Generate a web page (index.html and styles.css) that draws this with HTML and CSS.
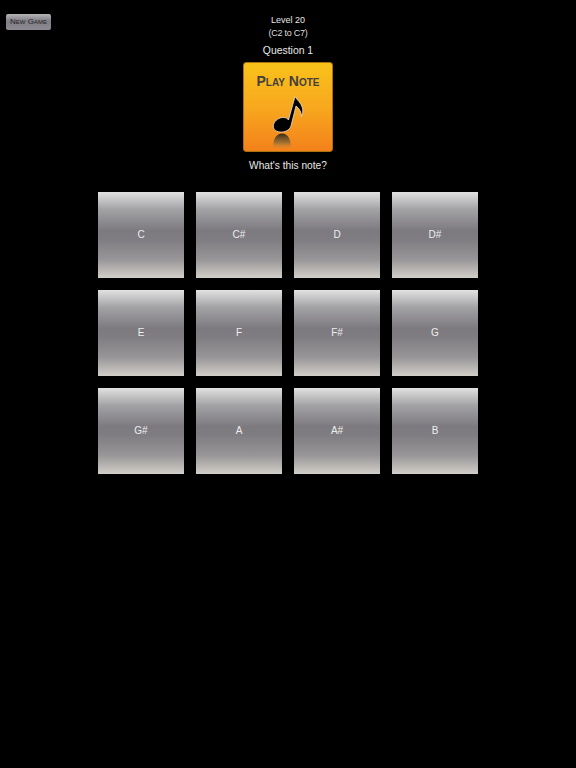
FILE: index.html
```html
<!DOCTYPE html>
<html lang="en">
<head>
<meta charset="utf-8">
<title>Level 20</title>
<link rel="stylesheet" href="styles.css">
</head>
<body>
<button class="new-game">New Game</button>
<main class="game">
  <div class="level">Level 20</div>
  <div class="range">(C2 to C7)</div>
  <div class="question">Question 1</div>
  <button class="play">
    <span class="play-label">Play Note</span>
    <svg class="note" viewBox="0 0 46 64" width="46" height="64" aria-hidden="true">
      <defs>
        <linearGradient id="refl" x1="0" y1="0" x2="0" y2="1">
          <stop offset="0" stop-color="#2e2416" stop-opacity=".95"/>
          <stop offset=".6" stop-color="#77603c" stop-opacity=".7"/>
          <stop offset="1" stop-color="#b08a48" stop-opacity=".15"/>
        </linearGradient>
      </defs>
      <path d="M8.500 58C7.500 50 11 43.500 17 43.500S26.500 50 25.500 58z" fill="url(#refl)"/>
      <path d="M23.500 30 30 6.500c2 3.500 6 6 7.500 11.500.8 3 0 6-1 8.500 0-4.500-2.500-8.500-5.500-10.500L26 36c-1.500 4-6 6.500-11 6-5-.5-7.500-3.500-6.500-7.500 1-4 6-7.500 10.500-7 2 .2 3.700 1 4.500 2.500z" fill="#000" stroke="#e8e0d0" stroke-width=".8" stroke-linejoin="round"/>
    </svg>
  </button>
  <div class="prompt">What's this note?</div>
  <div class="notes">
    <button class="key">C</button>
    <button class="key">C#</button>
    <button class="key">D</button>
    <button class="key">D#</button>
    <button class="key">E</button>
    <button class="key">F</button>
    <button class="key">F#</button>
    <button class="key">G</button>
    <button class="key">G#</button>
    <button class="key">A</button>
    <button class="key">A#</button>
    <button class="key">B</button>
  </div>
</main>
</body>
</html>
```
FILE: styles.css
```css
html, body {
  margin: 0;
  height: 100%;
  background: #000;
}
body {
  position: relative;
  width: 576px;
  height: 768px;
  overflow: hidden;
  font-family: "Liberation Sans", Arial, sans-serif;
  color: #fff;
}
button {
  font-family: inherit;
  padding: 0;
  cursor: pointer;
}
.new-game {
  position: absolute;
  left: 6px;
  top: 14px;
  width: 45px;
  height: 16px;
  border: 0;
  border-radius: 2px;
  background: linear-gradient(#b4b3b6, #807e84 45%, #8e8c92);
  color: #26262a;
  font-size: 8px;
  font-variant: small-caps;
  line-height: 16px;
  white-space: nowrap;
  text-align: center;
}
.game {
  display: flex;
  flex-direction: column;
  align-items: center;
  padding-top: 14px;
}
.level {
  font-size: 9px;
  line-height: 13px;
  color: #e6e6e6;
}
.range {
  font-size: 9px;
  letter-spacing: -.25px;
  line-height: 12px;
  color: #dcdcdc;
}
.question {
  font-size: 10.400px;
  line-height: 14px;
  margin-top: 5px;
  color: #e8e8e8;
}
.play {
  position: relative;
  display: flex;
  flex-direction: column;
  align-items: center;
  box-sizing: border-box;
  width: 90px;
  height: 90px;
  margin-top: 4px;
  border: 1px solid #a8720f;
  border-radius: 3px;
  background: linear-gradient(#f8c21a, #f8a81e 50%, #f3811b);
}
.play-label {
  margin-top: 10px;
  font-size: 14px;
  font-weight: bold;
  font-variant: small-caps;
  line-height: 16px;
  white-space: nowrap;
  color: #43403c;
}
.note {
  position: absolute;
  left: 21px;
  top: 27px;
}
.prompt {
  font-size: 10.200px;
  line-height: 14px;
  margin-top: 7px;
  color: #e8e8e8;
}
.notes {
  display: grid;
  grid-template-columns: repeat(4, 86px);
  grid-auto-rows: 86px;
  gap: 12px;
  margin-top: 19px;
}
.key {
  border: 0;
  padding-bottom: 2px;
  background: linear-gradient(#e2e2e2 0, #a3a2a5 20%, #7c7a7f 45%, #7f7d81 55%, #979597 78%, #d2cec9 100%);
  color: #eee;
  font-size: 10px;
}
```
